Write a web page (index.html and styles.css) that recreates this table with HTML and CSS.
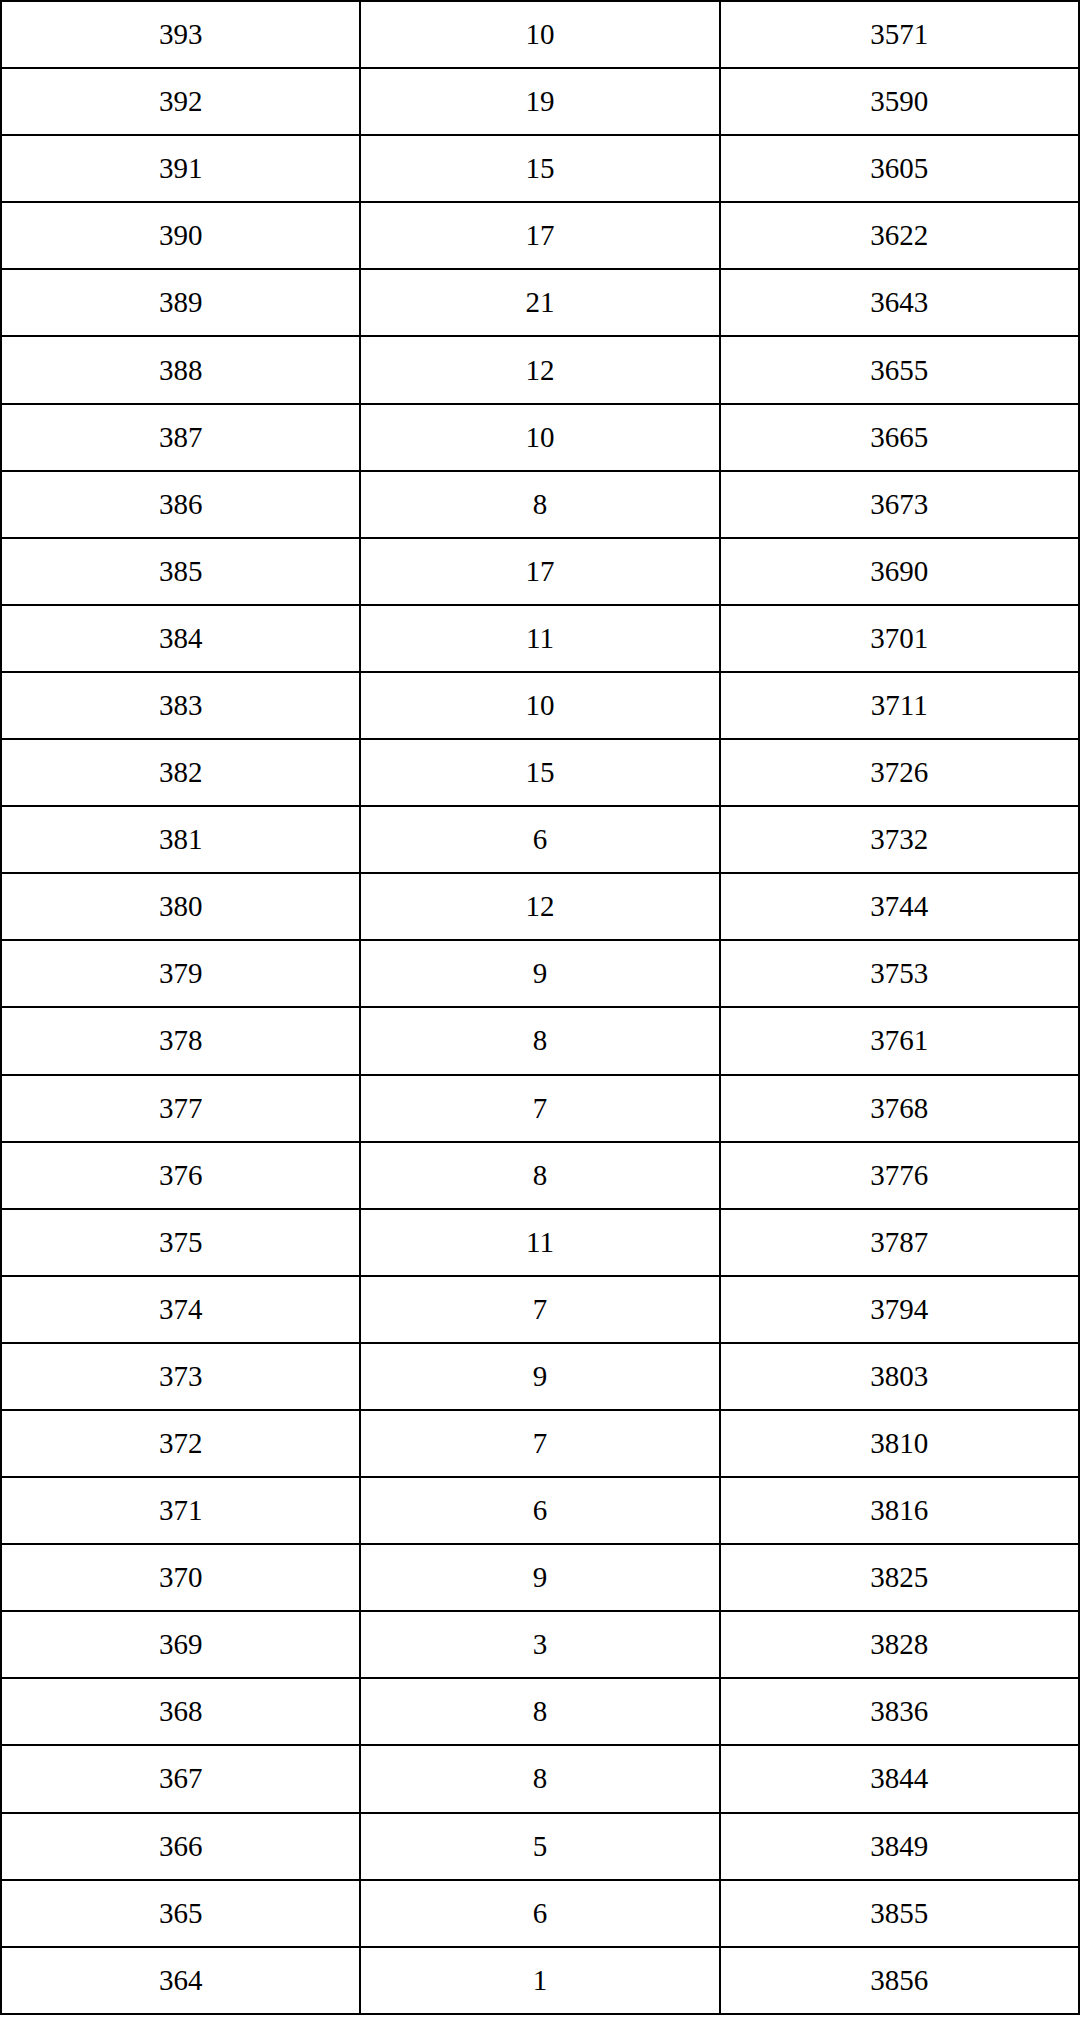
FILE: index.html
```html
<!DOCTYPE html>
<html>
<head>
<meta charset="utf-8">
<link rel="stylesheet" href="styles.css">
</head>
<body>
<table class="score-table">
<tbody>
<tr><td>393</td><td>10</td><td>3571</td></tr>
<tr><td>392</td><td>19</td><td>3590</td></tr>
<tr><td>391</td><td>15</td><td>3605</td></tr>
<tr><td>390</td><td>17</td><td>3622</td></tr>
<tr><td>389</td><td>21</td><td>3643</td></tr>
<tr><td>388</td><td>12</td><td>3655</td></tr>
<tr><td>387</td><td>10</td><td>3665</td></tr>
<tr><td>386</td><td>8</td><td>3673</td></tr>
<tr><td>385</td><td>17</td><td>3690</td></tr>
<tr><td>384</td><td>11</td><td>3701</td></tr>
<tr><td>383</td><td>10</td><td>3711</td></tr>
<tr><td>382</td><td>15</td><td>3726</td></tr>
<tr><td>381</td><td>6</td><td>3732</td></tr>
<tr><td>380</td><td>12</td><td>3744</td></tr>
<tr><td>379</td><td>9</td><td>3753</td></tr>
<tr><td>378</td><td>8</td><td>3761</td></tr>
<tr><td>377</td><td>7</td><td>3768</td></tr>
<tr><td>376</td><td>8</td><td>3776</td></tr>
<tr><td>375</td><td>11</td><td>3787</td></tr>
<tr><td>374</td><td>7</td><td>3794</td></tr>
<tr><td>373</td><td>9</td><td>3803</td></tr>
<tr><td>372</td><td>7</td><td>3810</td></tr>
<tr><td>371</td><td>6</td><td>3816</td></tr>
<tr><td>370</td><td>9</td><td>3825</td></tr>
<tr><td>369</td><td>3</td><td>3828</td></tr>
<tr><td>368</td><td>8</td><td>3836</td></tr>
<tr><td>367</td><td>8</td><td>3844</td></tr>
<tr><td>366</td><td>5</td><td>3849</td></tr>
<tr><td>365</td><td>6</td><td>3855</td></tr>
<tr><td>364</td><td>1</td><td>3856</td></tr>
</tbody>
</table>
</body>
</html>
```

FILE: styles.css
```css
html, body {
  margin: 0;
  padding: 0;
  background: #fff;
}
.score-table {
  width: 1080px;
  border-collapse: collapse;
  table-layout: fixed;
  font-family: "Liberation Serif", "Noto Serif CJK SC", serif;
  font-size: 29px;
  color: #000;
}
.score-table tr {
  height: 67.1px;
}
.score-table td {
  border: 2px solid #000;
  text-align: center;
  vertical-align: middle;
  padding: 0;
  line-height: 1;
}
```
